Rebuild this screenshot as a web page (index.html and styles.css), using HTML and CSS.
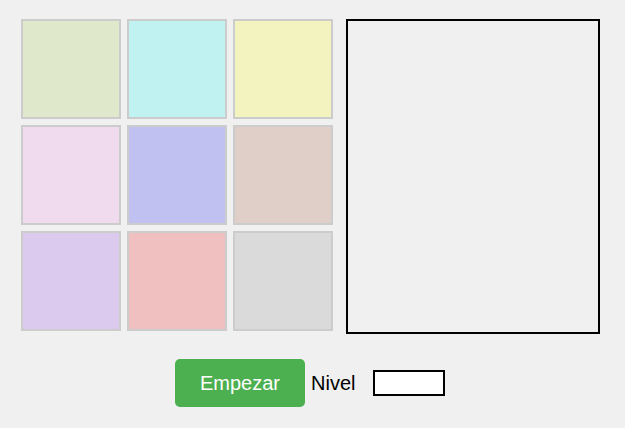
FILE: index.html
```html
<!DOCTYPE html>
<html lang="es">
<head>
<meta charset="utf-8">
<title>Juego</title>
<link rel="stylesheet" href="styles.css">
</head>
<body>
<div class="top">
  <div class="grid">
    <div class="tile c1"></div>
    <div class="tile c2"></div>
    <div class="tile c3"></div>
    <div class="tile c4"></div>
    <div class="tile c5"></div>
    <div class="tile c6"></div>
    <div class="tile c7"></div>
    <div class="tile c8"></div>
    <div class="tile c9"></div>
  </div>
  <div class="panel"></div>
</div>
<div class="controls">
  <button class="start">Empezar</button>
  <span class="label">Nivel</span>
  <input class="level" type="text">
</div>
</body>
</html>
```
FILE: styles.css
```css
html, body {
  margin: 0;
  padding: 0;
  background: #f0f0f0;
  font-family: "Liberation Sans", Arial, sans-serif;
}
.top {
  display: flex;
  align-items: flex-start;
  padding: 19px 0 0 21px;
}
.grid {
  display: grid;
  grid-template-columns: repeat(3, 100px);
  grid-auto-rows: 100px;
  gap: 6px;
}
.tile {
  box-sizing: border-box;
  border: 2px solid #cccccc;
}
.c1 { background: #e0e8cc; }
.c2 { background: #c0f2f2; }
.c3 { background: #f3f3c0; }
.c4 { background: #efdaee; }
.c5 { background: #c1c1f1; }
.c6 { background: #e0cfc8; }
.c7 { background: #dccaee; }
.c8 { background: #f0c0c0; }
.c9 { background: #dadada; }
.panel {
  box-sizing: border-box;
  width: 254px;
  height: 315px;
  margin-left: 13px;
  border: 2px solid #000;
}
.controls {
  display: flex;
  align-items: center;
  padding: 25px 0 0 175px;
}
.start {
  width: 130px;
  height: 48px;
  border: none;
  border-radius: 5px;
  background: #4caf50;
  color: #fff;
  font-family: "Liberation Sans", Arial, sans-serif;
  font-size: 20px;
  padding: 0;
}
.label {
  margin-left: 6px;
  font-size: 20px;
  color: #000;
}
.level {
  box-sizing: border-box;
  width: 72px;
  height: 26px;
  margin: 0 0 0 18px;
  border: 2px solid #000;
  background: #fff;
  padding: 0;
}
```
